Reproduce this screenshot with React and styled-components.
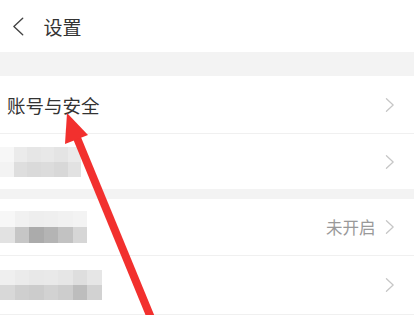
import React from 'react'
import styled, { createGlobalStyle } from 'styled-components'

const GlobalStyle = createGlobalStyle`
	html, body {
		margin: 0;
		padding: 0;
		background: #fff;
		font-family: "Noto Sans CJK SC", "Noto Sans", sans-serif;
	}
`

const Page = styled.div`
	position: relative;
	width: 414px;
	height: 315px;
	overflow: hidden;
	background: #fff;
`

const Header = styled.header`
	display: flex;
	align-items: center;
	height: 52px;
	padding-left: 12px;
	gap: 19px;
`

const Title = styled.h1`
	margin: 0;
	font-size: 19px;
	font-weight: 400;
	color: #333;
`

const Band = styled.div`
	height: ${props => props.h}px;
	background: #f3f3f3;
`

const Row = styled.div`
	display: flex;
	align-items: center;
	height: ${props => props.h}px;
	padding: 0 19px 0 7px;
	border-bottom: ${props => (props.last ? 'none' : '1px solid #f0f0f0')};
`

const Label = styled.span`
	flex: 1;
	font-size: 18.5px;
	color: #333;
`

const Value = styled.span`
	font-size: 16.5px;
	color: #999;
	margin-right: 10px;
`

const Mosaic = styled.div`
	flex: 1;
	display: flex;
	flex-direction: column;
	margin-left: -7px;
`

const MosaicLine = styled.div`
	display: flex;
`

const Cell = styled.div`
	width: ${props => props.w}px;
	height: ${props => props.h}px;
	background: ${props => props.c};
`

const Overlay = styled.svg`
	position: absolute;
	left: 0;
	top: 0;
	pointer-events: none;
`

const Chevron = ({ size = 16, color = '#c6c6c6', dir = 'right', weight = 1.3 }) => (
	<svg width={size * 0.6} height={size} viewBox="0 0 10 16" fill="none">
		<path
			d={dir === 'right' ? 'M1.5 1.5 L8.5 8 L1.5 14.5' : 'M8.5 1.5 L1.5 8 L8.5 14.5'}
			stroke={color}
			strokeWidth={weight}
			strokeLinecap="round"
			strokeLinejoin="round"
		/>
	</svg>
)

const blur = [
	{
		top: ['#f7f7f7', '#ebebeb', '#e6e6e6', '#e8e8e8', '#e4e4e4', '#eaeaea'],
		bottom: ['#f3f3f3', '#dedede', '#dadada', '#dcdcdc', '#d8d8d8', '#e2e2e2'],
		w: 13.5,
		h: 15,
	},
	{
		top: ['#f7f7f7', '#f1f1f1', '#eeeeee', '#efefef', '#f1f1f1', '#f3f3f3'],
		bottom: ['#e2e2e2', '#c6c6c6', '#ababab', '#b4b4b4', '#c2c2c2', '#d6d6d6'],
		w: 14.5,
		h: 16,
	},
	{
		top: ['#efefef', '#ebebeb', '#e8e8e8', '#e9e9e9', '#e6e6e6', '#dedede', '#e6e6e6'],
		bottom: ['#d8d8d8', '#cfcfcf', '#cccccc', '#d2d2d2', '#cdcdcd', '#bdbdbd', '#d2d2d2'],
		w: 14.5,
		h: 15,
	},
]

const Blurred = ({ data }) => (
	<Mosaic>
		<MosaicLine>
			{data.top.map((c, i) => (
				<Cell key={i} c={c} w={data.w} h={data.h} />
			))}
		</MosaicLine>
		<MosaicLine>
			{data.bottom.map((c, i) => (
				<Cell key={i} c={c} w={data.w} h={data.h} />
			))}
		</MosaicLine>
	</Mosaic>
)

const App = () => (
	<Page>
		<GlobalStyle />
		<Header>
			<Chevron size={21} color="#444" dir="left" weight={1.1} />
			<Title>设置</Title>
		</Header>
		<Band h={24} />
		<Row h={57}>
			<Label>账号与安全</Label>
			<Chevron />
		</Row>
		<Row h={55} last>
			<Blurred data={blur[0]} />
			<Chevron />
		</Row>
		<Band h={10} />
		<Row h={56}>
			<Blurred data={blur[1]} />
			<Value>未开启</Value>
			<Chevron />
		</Row>
		<Row h={58}>
			<Blurred data={blur[2]} />
			<Chevron />
		</Row>
		<Overlay width="414" height="315" viewBox="0 0 414 315">
			<line x1="77" y1="138" x2="156" y2="330" stroke="#f2302e" strokeWidth="8" />
			<polygon points="67,113 88,135 65,144" fill="#f2302e" />
		</Overlay>
	</Page>
)

export default App
